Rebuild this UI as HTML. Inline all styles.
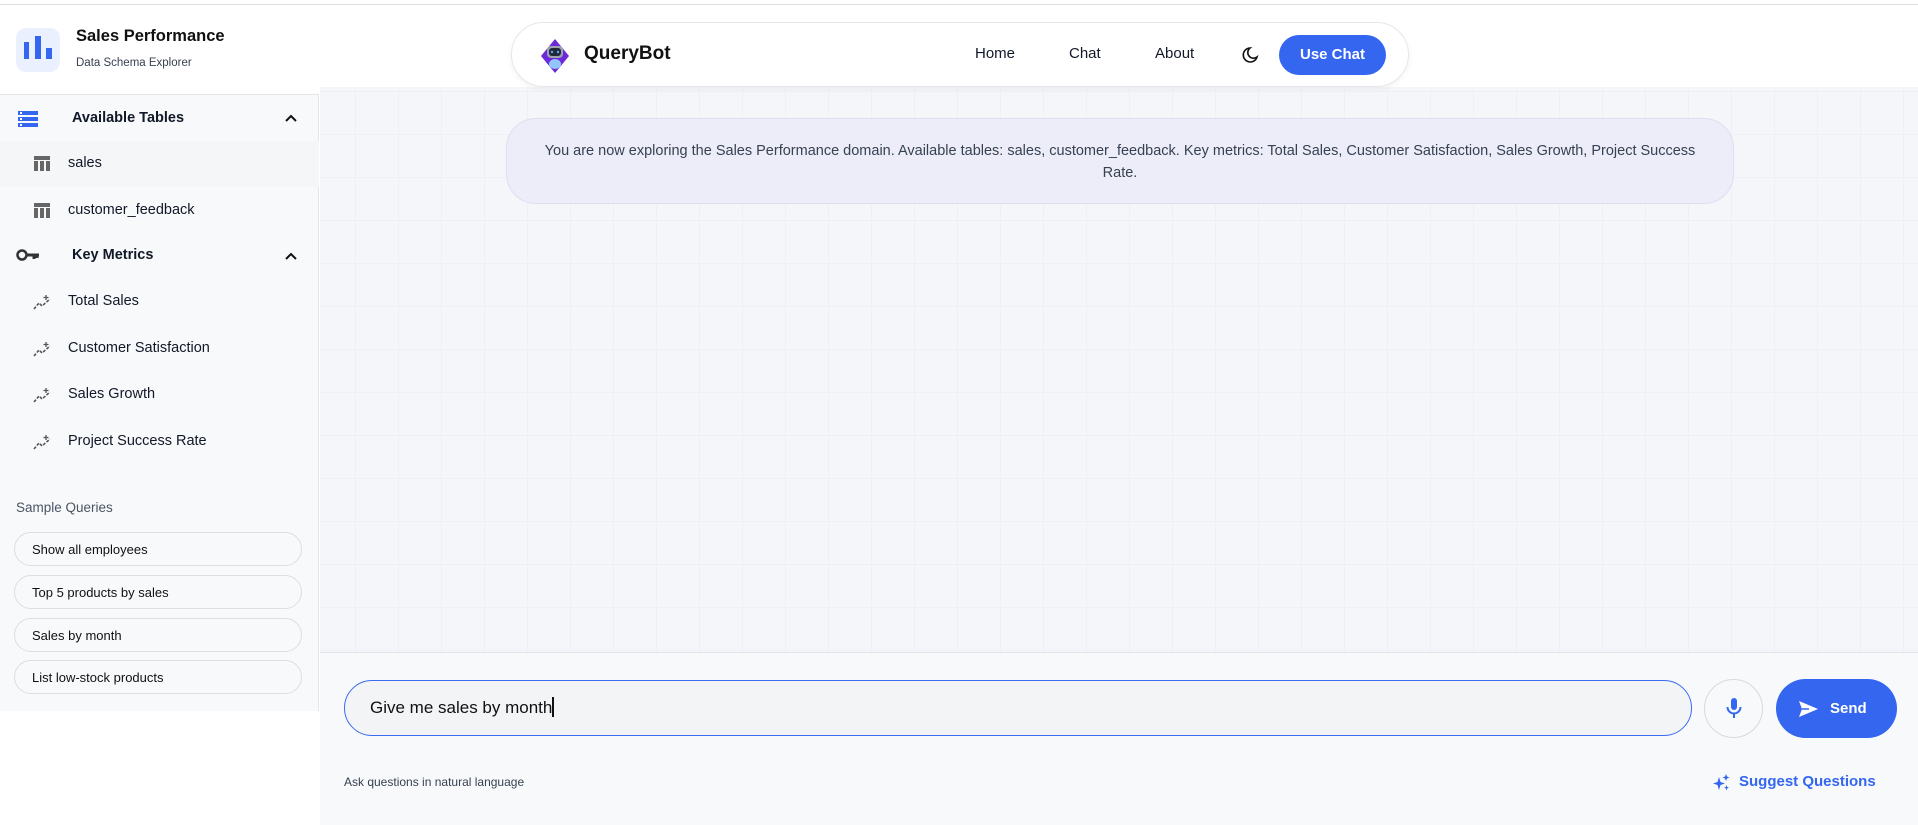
<!DOCTYPE html>
<html><head><meta charset="utf-8"><style>
*{box-sizing:border-box;margin:0;padding:0}
body{width:1918px;height:825px;overflow:hidden;font-family:"Liberation Sans",sans-serif;background:#fff;position:relative;color:#111827}
.topline{position:absolute;left:0;top:4px;width:1918px;height:1px;background:#ddd}
.side{position:absolute;left:0;top:5px;width:319px;height:706px;background:#f8f9fb;border-right:1px solid #e3e5ea}
.sidehead{position:absolute;left:0;top:0;width:319px;height:90px;background:#fff;border-bottom:1px solid #e2e4e8}
.logo{position:absolute;left:16px;top:23px;width:44px;height:44px;border-radius:10px;background:#eaf0fd}
.t{position:absolute;white-space:nowrap}
.row{position:absolute;left:0;width:319px;height:46px}
.q{position:absolute;left:14px;width:288px;height:34px;border:1px solid #dcdee3;border-radius:17px;font-size:13px;padding:9px 0 0 17px;color:#111}
.main{position:absolute;left:320px;top:5px;width:1598px;height:647px;background-color:#f5f6fa;background-image:linear-gradient(#eef0f6 1px,transparent 1px),linear-gradient(90deg,#eef0f6 1px,transparent 1px);background-size:43px 43px;background-position:-8px 0}
.mainTop{position:absolute;left:320px;top:5px;width:1598px;height:82px;background:#fff}
.nav{position:absolute;left:511px;top:22px;width:898px;height:65px;background:#fff;border:1px solid #e6e7ea;border-radius:33px;box-shadow:0 2px 6px rgba(0,0,0,.05)}
.banner{position:absolute;left:506px;top:118px;width:1228px;height:86px;background:#ecedf9;border:1px solid #dcdff0;border-radius:30px;text-align:center;font-size:14.5px;line-height:22px;color:#374151;padding:21px 10px 0}
.bottom{position:absolute;left:320px;top:652px;width:1598px;height:173px;background:#f8f9fb;border-top:1px solid #e2e4e8}
</style></head><body>
<div class="topline"></div>
<div class="side">
 <div class="sidehead">
  <div class="logo"><svg width="44" height="44"><rect x="8" y="14" width="5" height="17" fill="#3466f0"/><rect x="19" y="8" width="6" height="23" fill="#3466f0"/><rect x="30" y="20" width="6" height="11" fill="#3466f0"/></svg></div>
  <div class="t" style="left:76px;top:22px;font-size:16.5px;font-weight:bold;color:#111">Sales Performance</div>
  <div class="t" style="left:76px;top:52px;font-size:11.5px;color:#374151">Data Schema Explorer</div>
 </div>
 <div class="row" style="top:90px"><svg class="t" style="left:18px;top:16px" width="20" height="16"><rect x="0" y="0" width="20" height="4" fill="#3466f0"/><rect x="0" y="6" width="20" height="4" fill="#3466f0"/><rect x="0" y="12" width="20" height="4" fill="#3466f0"/><rect x="2" y="1" width="2" height="2" fill="#fff"/><rect x="2" y="7" width="2" height="2" fill="#fff"/><rect x="2" y="13" width="2" height="2" fill="#fff"/></svg>
  <div class="t" style="left:72px;top:15px;font-size:14.5px;font-weight:bold">Available Tables</div>
  <svg class="t" style="left:284px;top:18px" width="14" height="10"><path d="M2 8 L7 3 L12 8" stroke="#111" stroke-width="2" fill="none"/></svg></div>
 <div class="row" style="top:136px;background:#f5f6f8"><svg class="t" style="left:34px;top:15px" width="16" height="15"><rect x="0" y="0" width="16" height="4" fill="#666"/><rect x="0" y="5" width="4" height="10" fill="#666"/><rect x="6" y="5" width="4" height="10" fill="#666"/><rect x="12" y="5" width="4" height="10" fill="#666"/></svg><div class="t" style="left:68px;top:14px;font-size:14.5px">sales</div></div>
 <div class="row" style="top:183px"><svg class="t" style="left:34px;top:15px" width="16" height="15"><rect x="0" y="0" width="16" height="4" fill="#666"/><rect x="0" y="5" width="4" height="10" fill="#666"/><rect x="6" y="5" width="4" height="10" fill="#666"/><rect x="12" y="5" width="4" height="10" fill="#666"/></svg><div class="t" style="left:68px;top:14px;font-size:14.5px">customer_feedback</div></div>
 <div class="row" style="top:228px"><svg class="t" style="left:16px;top:15px" width="24" height="14"><circle cx="6" cy="7" r="4.5" stroke="#333" stroke-width="2.5" fill="none"/><path d="M10 7 H23 M18 7 V11 M21 7 V10" stroke="#333" stroke-width="3"/></svg><div class="t" style="left:72px;top:14px;font-size:14.5px;font-weight:bold">Key Metrics</div>
  <svg class="t" style="left:284px;top:18px" width="14" height="10"><path d="M2 8 L7 3 L12 8" stroke="#111" stroke-width="2" fill="none"/></svg></div>
 <div class="t" style="left:33px;top:290px"><svg width="19" height="15"><path d="M1 14 L6 8 L9 11 L17 4" stroke="#555" stroke-width="1.6" fill="none" stroke-dasharray="3 1.5"/><path d="M13 0v5M10.5 2.5h5" stroke="#555" stroke-width="1.3"/></svg></div><div class="t" style="left:68px;top:288px;font-size:14.5px">Total Sales</div>
 <div class="t" style="left:33px;top:337px"><svg width="19" height="15"><path d="M1 14 L6 8 L9 11 L17 4" stroke="#555" stroke-width="1.6" fill="none" stroke-dasharray="3 1.5"/><path d="M13 0v5M10.5 2.5h5" stroke="#555" stroke-width="1.3"/></svg></div><div class="t" style="left:68px;top:335px;font-size:14.5px">Customer Satisfaction</div>
 <div class="t" style="left:33px;top:383px"><svg width="19" height="15"><path d="M1 14 L6 8 L9 11 L17 4" stroke="#555" stroke-width="1.6" fill="none" stroke-dasharray="3 1.5"/><path d="M13 0v5M10.5 2.5h5" stroke="#555" stroke-width="1.3"/></svg></div><div class="t" style="left:68px;top:381px;font-size:14.5px">Sales Growth</div>
 <div class="t" style="left:33px;top:430px"><svg width="19" height="15"><path d="M1 14 L6 8 L9 11 L17 4" stroke="#555" stroke-width="1.6" fill="none" stroke-dasharray="3 1.5"/><path d="M13 0v5M10.5 2.5h5" stroke="#555" stroke-width="1.3"/></svg></div><div class="t" style="left:68px;top:428px;font-size:14.5px">Project Success Rate</div>
 <div class="t" style="left:16px;top:495px;font-size:13.5px;color:#4b5563">Sample Queries</div>
 <div class="q" style="top:527px">Show all employees</div>
 <div class="q" style="top:570px">Top 5 products by sales</div>
 <div class="q" style="top:613px">Sales by month</div>
 <div class="q" style="top:655px">List low-stock products</div>
</div>
<div class="main"></div>
<div class="mainTop"></div>
<div class="nav">
 <svg class="t" style="left:26px;top:14px" width="34" height="38"><path d="M17 2 L31 19 L17 36 L3 19Z" fill="#6d28d9"/><rect x="9" y="9" width="16" height="12" rx="4" fill="#9ca3af"/><rect x="11" y="11" width="12" height="8" rx="3" fill="#1f2937"/><circle cx="14" cy="15" r="1.2" fill="#60a5fa"/><circle cx="20" cy="15" r="1.2" fill="#60a5fa"/><ellipse cx="17" cy="27" rx="6" ry="5" fill="#93c5fd"/></svg>
 <div class="t" style="left:72px;top:20px;font-size:19px;font-weight:bold;color:#111">QueryBot</div>
 <div class="t" style="left:463px;top:22px;font-size:15px">Home</div>
 <div class="t" style="left:557px;top:22px;font-size:15px">Chat</div>
 <div class="t" style="left:643px;top:22px;font-size:15px">About</div>
 <svg class="t" style="left:729px;top:23px" width="18" height="18"><path d="M9 2 A7 7 0 1 0 16 11 A5.5 5.5 0 0 1 9 2Z" stroke="#111" stroke-width="1.6" fill="none"/></svg>
 <div class="t" style="left:767px;top:12px;width:107px;height:40px;border-radius:20px;background:#3466f0;color:#fff;font-size:15px;font-weight:bold;text-align:center;line-height:40px">Use Chat</div>
</div>
<div class="banner">You are now exploring the Sales Performance domain. Available tables: sales, customer_feedback. Key metrics: Total Sales, Customer Satisfaction, Sales Growth, Project Success<br>Rate.</div>
<div class="bottom">
 <div class="t" style="left:24px;top:27px;width:1348px;height:56px;border:1.5px solid #3b6cf0;border-radius:28px;background:#f3f4f6;font-size:17px;padding:16px 0 0 25px;color:#111">Give me sales by month<span style="display:inline-block;width:2px;height:20px;background:#111;vertical-align:-4px"></span></div>
 <div class="t" style="left:1384px;top:26px;width:59px;height:59px;border:1px solid #d7d9de;border-radius:50%;background:#f8f9fb"><svg style="position:absolute;left:21px;top:18px" width="16" height="22"><rect x="5" y="0" width="6" height="12" rx="3" fill="#3466f0"/><path d="M1.5 9 A6.5 6.5 0 0 0 14.5 9 M8 15.5 V20" stroke="#3466f0" stroke-width="2" fill="none"/></svg></div>
 <div class="t" style="left:1456px;top:26px;width:121px;height:59px;border-radius:30px;background:#3466f0;color:#fff;font-size:15px;font-weight:bold;line-height:59px;padding-left:54px">Send<svg style="position:absolute;left:23px;top:22px" width="20" height="16"><path d="M0 0 L19 8 L0 16 L3 8Z" fill="#fff"/><path d="M3 8 H10" stroke="#3466f0" stroke-width="1.5"/></svg></div>
 <div class="t" style="left:24px;top:122px;font-size:12px;color:#374151">Ask questions in natural language</div>
 <svg class="t" style="left:1393px;top:121px" width="17" height="17"><path d="M6 3 L7.5 8 L12 9.5 L7.5 11 L6 16 L4.5 11 L0 9.5 L4.5 8Z" fill="#3466f0"/><path d="M13 0 L14 2.5 L16.5 3.5 L14 4.5 L13 7 L12 4.5 L9.5 3.5 L12 2.5Z" fill="#3466f0"/><path d="M13.5 11 L14.2 13 L16 13.7 L14.2 14.4 L13.5 16.5 L12.8 14.4 L11 13.7 L12.8 13Z" fill="#3466f0"/></svg>
 <div class="t" style="left:1419px;top:120px;font-size:15px;font-weight:bold;color:#3466f0">Suggest Questions</div>
</div>
</body></html>
